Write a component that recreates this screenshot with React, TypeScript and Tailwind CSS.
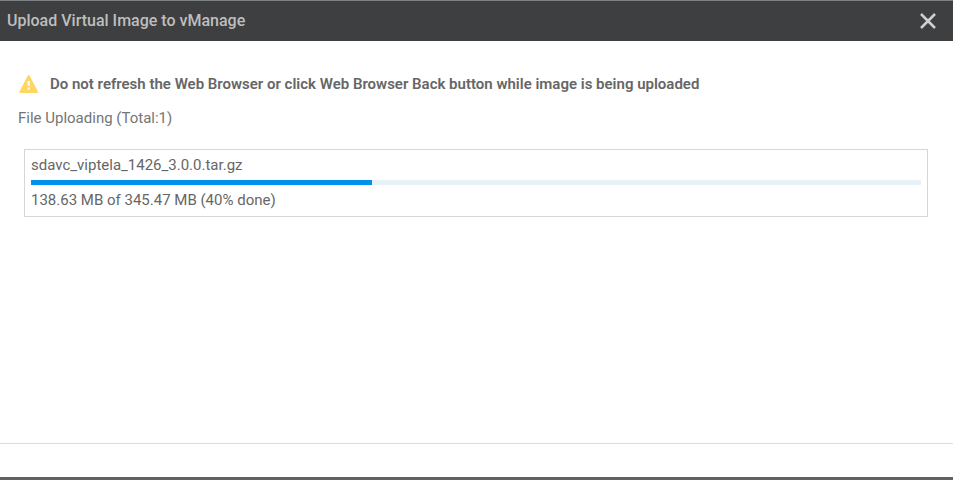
const upload = {
  name: "sdavc_viptela_1426_3.0.0.tar.gz",
  status: "138.63 MB of 345.47 MB (40% done)",
  barPercent: 38.3,
};

function WarningIcon() {
  return (
    <svg className="h-5 w-5 shrink-0" viewBox="0 0 20 20" aria-hidden="true">
      <path
        d="M10.7 2.2 18.8 17.8H2.6Z"
        fill="#ffd663"
        stroke="#ffd663"
        strokeWidth="2.2"
        strokeLinejoin="round"
      />
      <path d="M9.6 7h2.2v5H9.6ZM9.6 13.4h2.2v2.2H9.6Z" fill="#fff" />
    </svg>
  );
}

function UploadCard() {
  return (
    <section className="ml-1.5 mr-[7px] border border-[#d6d6d6] px-1.5 pt-1 pb-[5px]">
      <p id="file-name" className="leading-[22px]">{upload.name}</p>
      <div
        role="progressbar"
        aria-labelledby="file-name"
        aria-valuenow={40}
        aria-valuemin={0}
        aria-valuemax={100}
        className="my-1 h-[5px] bg-[#e6f2f8]"
      >
        <div className="h-full bg-[#0091ea]" style={{ width: `${upload.barPercent}%` }} />
      </div>
      <p className="leading-[22px]">{upload.status}</p>
    </section>
  );
}

export default function App() {
  return (
    <div
      role="dialog"
      aria-labelledby="dialog-title"
      className="flex min-h-screen flex-col border-b-[3px] border-[#626262] bg-white font-[Roboto,sans-serif] text-[15px] text-[#666666]"
    >
      <header className="flex h-[41px] items-center justify-between border-t border-[#7c8081] bg-[#3e3f41] pr-4 pl-[7px] text-[#bebebe]">
        <h1 id="dialog-title" className="text-base font-medium">Upload Virtual Image to vManage</h1>
        <button type="button" aria-label="Close" className="text-[#d0d0d0]">
          <svg className="h-[18px] w-[18px]" viewBox="0 0 18 18" aria-hidden="true">
            <path d="M2 2 16 16M16 2 2 16" fill="none" stroke="currentColor" strokeWidth="2.5" />
          </svg>
        </button>
      </header>
      <main className="flex-1 px-[18px] pt-8">
        <div className="flex items-center gap-3">
          <WarningIcon />
          <p className="font-semibold leading-[22px]">
            Do not refresh the Web Browser or click Web Browser Back button while image is being uploaded
          </p>
        </div>
        <h2 className="mt-3 mb-5 leading-[22px] text-[#757575]">File Uploading (Total:1)</h2>
        <UploadCard />
      </main>
      <footer className="h-[34px] border-t border-[#dcdcdc]" />
    </div>
  );
}
